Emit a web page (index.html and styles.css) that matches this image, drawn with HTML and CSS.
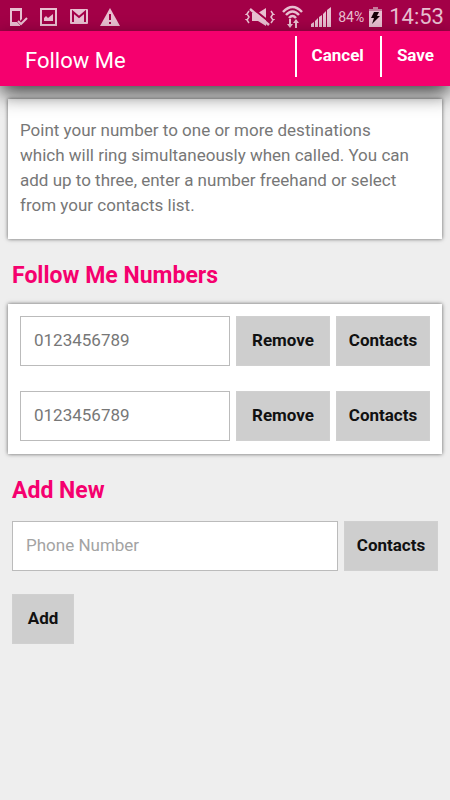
FILE: index.html
```html
<!DOCTYPE html>
<html lang="en">
<head>
    <meta charset="UTF-8">
    <meta name="viewport" content="width=device-width, initial-scale=1.0">
    <title>Follow Me</title>
    <link rel="stylesheet" href="styles.css">
</head>
<body>

    <div class="status-bar">
        <div class="notifications">
            <svg width="18" height="20" viewBox="0 0 18 20" aria-hidden="true">
                <path class="fill" fill-rule="evenodd" d="M0 1H12V12L10 14V4H2V15H7L10 18V19H0Z"/>
                <path class="line" d="M8 14L11 17L17 11" stroke-width="2"/>
            </svg>
            <svg width="18" height="20" viewBox="0 0 18 20" aria-hidden="true">
                <path class="fill" fill-rule="evenodd" d="M0 1H17V19H0ZM2 3V17H15V3ZM4 14V11L6 9L8 11L13 7V14Z"/>
            </svg>
            <svg width="18" height="20" viewBox="0 0 18 20" aria-hidden="true">
                <rect class="fill" x="0" y="2" width="18" height="15" rx="1"/>
                <path d="M3 15V5L9 10L15 5V15" fill="none" stroke="#a30047" stroke-width="2"/>
            </svg>
            <svg width="20" height="20" viewBox="0 0 20 20" aria-hidden="true">
                <path class="fill" d="M10 1L20 19H0Z"/>
                <path d="M9 7H11V13H9ZM9 15H11V17H9Z" fill="#a30047"/>
            </svg>
        </div>
        <div class="system">
            <svg width="30" height="22" viewBox="0 0 30 22" aria-hidden="true">
                <path class="fill" d="M7 7H13L21 2V20L13 15H7Z"/>
                <path d="M7 2L27 18" stroke="#a30047" stroke-width="2"/>
                <path class="line" d="M5 3L24 19" stroke-width="2.500"/>
                <path class="line" d="M4 5L2 8L4 11L2 14L4 17M1 8V9M1 13V14M26 5L28 8L26 11L28 14L26 17M29 8V9M29 13V14" stroke-width="1.500"/>
            </svg>
            <svg width="22" height="24" viewBox="0 0 22 24" aria-hidden="true">
                <path class="line" d="M1 7Q10.500 -3 20 7M4 10Q10.500 3 17 10M7 13Q10.500 9 14 13" stroke-width="2.500"/>
                <path class="fill" d="M7 14H9V19H11L8 23L5 19H7ZM13 23V18H11L14 14L17 18H15V23Z"/>
            </svg>
            <svg width="20" height="22" viewBox="0 0 20 22" aria-hidden="true">
                <path class="fill" d="M0 18L3 16V21H0ZM4 15L7 12V21H4ZM8 11L11 9V21H8ZM12 8L15 5V21H12ZM16 4L20 1V21H16Z"/>
            </svg>
            <span class="percent">84%</span>
            <svg width="13" height="22" viewBox="0 0 13 22" aria-hidden="true">
                <path d="M4 1H9V3H13V8H0V3H4Z" fill="#c6799b"/>
                <path class="fill" d="M0 5H13V21H0Z"/>
                <path d="M5 6H10L8 10H11L3 18L5 12H2Z" fill="#170008"/>
            </svg>
            <span class="clock">14:53</span>
        </div>
    </div>

    <header class="header">
        <h1>Follow Me</h1>
        <div class="actions">
            <button type="button">Cancel</button>
            <button type="submit" form="followForm">Save</button>
        </div>
    </header>

    <main>
        <p class="card intro">Point your number to one or more destinations which will ring simultaneously when called. You can add up to three, enter a number freehand or select from your contacts list.</p>

        <h2>Follow Me Numbers</h2>
        <form class="card numbers" id="followForm">
            <div class="row">
                <input type="tel" value="0123456789" aria-label="First number">
                <button type="button" class="btn">Remove</button>
                <button type="button" class="btn">Contacts</button>
            </div>
            <div class="row">
                <input type="tel" value="0123456789" aria-label="Second number">
                <button type="button" class="btn">Remove</button>
                <button type="button" class="btn">Contacts</button>
            </div>
        </form>

        <h2>Add New</h2>
        <form class="add-new">
            <div class="row">
                <input type="tel" placeholder="Phone Number" aria-label="Phone number">
                <button type="button" class="btn">Contacts</button>
            </div>
            <button type="submit" class="btn add">Add</button>
        </form>
    </main>

</body>
</html>
```

FILE: styles.css
```css
* {
    box-sizing: border-box;
}

body {
    margin: 0;
    background-color: #eee;
    color: #777;
    font-family: Roboto, sans-serif;
    font-size: 17px;
}

button, input {
    font-family: inherit;
    font-size: 17px;
    border-radius: 0;
}

button {
    cursor: pointer;
    font-weight: bold;
}

/* Status bar */
.status-bar {
    display: flex;
    justify-content: space-between;
    align-items: center;
    height: 31px;
    padding: 2px 6px 0 10px;
    background-color: #a30047;
    color: #e8bfd0;
}

.notifications, .system {
    display: flex;
    align-items: center;
    gap: 12px;
}

.system {
    gap: 7px;
}

.status-bar .fill {
    fill: #e8bfd0;
}

.status-bar .line {
    fill: none;
    stroke: #e8bfd0;
}

.percent {
    font-size: 14px;
}

.system .percent + svg {
    margin-left: -2px;
}

.clock {
    font-size: 22px;
    line-height: 29px;
}

/* Title bar */
.header {
    position: relative;
    z-index: 1;
    display: flex;
    justify-content: space-between;
    padding: 5px 0 9px 25px;
    background-color: #f5006e;
    color: #fff;
    box-shadow: 0 8px 20px rgba(0, 0, 0, 0.7);
}

h1 {
    margin: 0;
    padding-top: 10px;
    font-size: 22px;
    font-weight: normal;
    line-height: 30px;
}

.actions {
    display: flex;
}

.actions button {
    height: 41px;
    padding: 0 16px 4px 15px;
    border: none;
    border-left: 2px solid #fff;
    background: none;
    color: #fff;
}

/* Cards */
main {
    padding: 13px 8px;
}

.card {
    margin: 0;
    background-color: #fff;
    box-shadow: 0 0 4px rgba(0, 0, 0, 0.6);
}

.intro {
    padding: 19px 26px 21px 12px;
    line-height: 25px;
}

h2 {
    margin: 22px 4px 13px;
    color: #f5006e;
    font-size: 23px;
    line-height: 30px;
}

.numbers {
    display: flex;
    flex-direction: column;
    gap: 25px;
    padding: 12px 12px 13px;
}

.row {
    display: flex;
    gap: 6px;
}

input {
    flex: 1;
    min-width: 0;
    height: 50px;
    padding: 0 13px 2px;
    border: 1px solid #bbb;
    background-color: #fff;
    color: #777;
}

input::placeholder {
    color: #a3a3a3;
}

.btn {
    flex: none;
    width: 94px;
    height: 50px;
    padding: 0 0 2px;
    border: 1px solid #d0d0d0;
    background-color: #cecece;
    color: #111;
}

.btn:hover {
    background-color: #c2c2c2;
}

.add-new {
    padding: 2px 4px 0;
}

.add {
    width: 62px;
    margin-top: 23px;
}
```
